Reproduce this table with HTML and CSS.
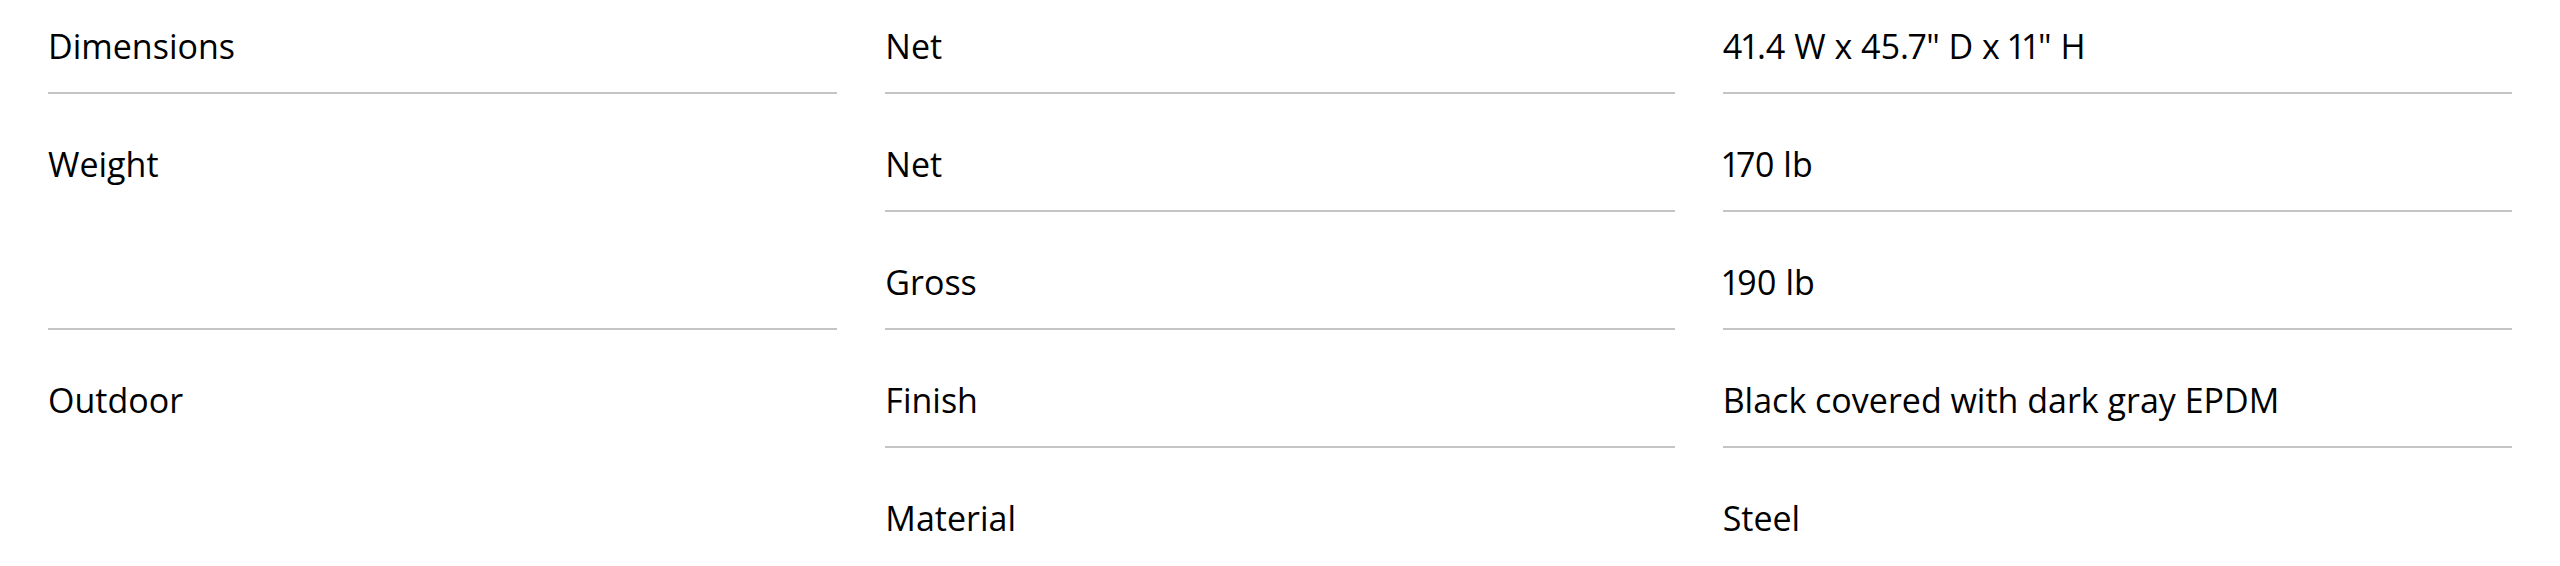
FILE: index.html
```html
<!DOCTYPE html>
<html lang="en">
<head>
<meta charset="utf-8">
<title>Specifications</title>
<link rel="stylesheet" href="styles.css">
</head>
<body>
<div class="specs">
  <div class="group">
    <div class="group-label">Dimensions</div>
    <div class="group-rows">
      <div class="cell">Net</div>
      <div class="cell">41.4 W x 45.7" D x 11" H</div>
    </div>
  </div>
  <div class="group">
    <div class="group-label">Weight</div>
    <div class="group-rows">
      <div class="cell">Net</div>
      <div class="cell">170 lb</div>
      <div class="cell">Gross</div>
      <div class="cell">190 lb</div>
    </div>
  </div>
  <div class="group">
    <div class="group-label">Outdoor</div>
    <div class="group-rows">
      <div class="cell">Finish</div>
      <div class="cell">Black covered with dark gray EPDM</div>
      <div class="cell">Material</div>
      <div class="cell">Steel</div>
    </div>
  </div>
</div>
</body>
</html>
```
FILE: styles.css
```css
html, body {
  margin: 0;
  padding: 0;
  background: #ffffff;
}

body {
  font-family: "Open Sans", "Liberation Sans", sans-serif;
  font-size: 34px;
  line-height: 46px;
  color: #000000;
  font-variant-numeric: proportional-nums;
  font-feature-settings: "pnum" 1;
}

.specs {
  padding: 0 48px;
}

.group {
  display: grid;
  grid-template-columns: repeat(3, 1fr);
  column-gap: 48px;
}

.group-label {
  padding: 47px 0 23px;
  border-bottom: 2px solid #c4c4c4;
}

.group-rows {
  grid-column: span 2;
  display: grid;
  grid-template-columns: 1fr 1fr;
  column-gap: 48px;
}

.cell {
  padding: 47px 0 23px;
  border-bottom: 2px solid #c4c4c4;
}

.group:first-child .group-label,
.group:first-child .cell {
  padding-top: 23px;
}

.group:last-child .group-label,
.group:last-child .cell:nth-last-child(-n+2) {
  border-bottom: none;
}
```
